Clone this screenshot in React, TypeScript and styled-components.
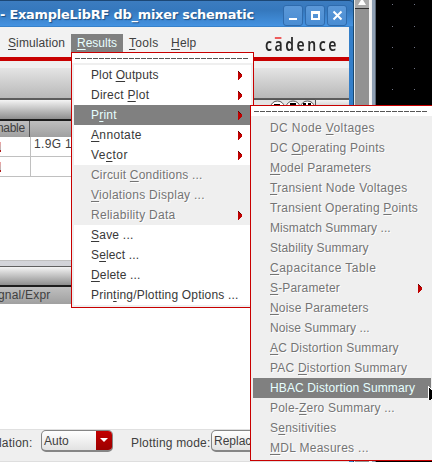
import React from "react";
import styled, { createGlobalStyle, css } from "styled-components";

const Global = createGlobalStyle`
  * { box-sizing: border-box; }
  body { margin: 0; overflow: hidden; background: #fff; }
`;

const Desktop = styled.div`
  position: relative;
  display: flex;
  width: 432px;
  height: 462px;
  overflow: hidden;
  background: #000;
  color: #404040;
  font: 12px/20px "Liberation Sans", sans-serif;
`;

const AppWindow = styled.main`
  width: 353px;
  height: 462px;
  border-right: 4px solid #347fc9;
  background: #fff;
  flex: none;
  display: flex;
  flex-direction: column;
  box-shadow: 1px 0 #17486f;
`;

const TitleBar = styled.header`
  height: 27px;
  flex: none;
  margin-right: -4px;
  border-top: 1px solid #1c4775;
  border-radius: 0 4px 0 0;
  background: linear-gradient(#3c7cc0, #3578bd 35%, #4492e0 95%, #2f77bd);
  display: flex;
  align-items: center;
  justify-content: space-between;
  padding: 2px 6px 0 0;
`;

const Title = styled.h1`
  margin: 0;
  color: #fff;
  font: bold 12.9px/20px "DejaVu Sans", sans-serif;
  letter-spacing: -0.21px;
  white-space: pre;
  text-shadow: 1px 1px 1px #1d4d80;
`;

const WindowButtons = styled.div`
  display: flex;
  gap: 2px;
`;

const WindowButton = styled.button`
  width: 20px;
  height: 21px;
  padding: 0;
  border: 1px solid #2f6bad;
  border-radius: 3px;
  background: linear-gradient(#5b98d8, #4a8dd3);
  display: grid;
  place-items: center;
`;

const MenuBar = styled.nav`
  height: 30px;
  flex: none;
  display: flex;
  background: #f2f2f2;
  padding: 7px 0 0 8px;
`;

const MenuTitle = styled.span<{ $w: number; $active?: boolean; $track?: number }>`
  width: ${(p) => p.$w}px;
  height: 18px;
  line-height: 18px;
  letter-spacing: ${(p) => p.$track ?? 0.3}px;
  white-space: nowrap;
  flex: none;
  ${(p) =>
    p.$active &&
    css`
      margin-right: 6px;
      padding-left: 6px;
      background: #808080;
      color: #e8ffff;
    `}
`;

const Key = styled.span`
  text-decoration: underline;
  text-decoration-thickness: 1px;
  text-underline-offset: 2px;
  text-decoration-skip-ink: none;
`;

const Logo = styled.div`
  position: relative;
  margin: 0 0 0 58px;
  width: 80px;
  height: 22px;
  color: #292929;
  font: 600 17px/22px "Noto Sans", sans-serif;
  letter-spacing: 3.1px;
  transform: scaleX(0.82);
  transform-origin: 0 0;
  white-space: nowrap;
`;

const Macron = styled.i`
  position: absolute;
  left: 12px;
  top: 3px;
  width: 8px;
  height: 2px;
  background: #ed5c5c;
`;

const Toolbar = styled.div`
  flex: none;
  height: 43px;
  border-top: 4px solid #c80000;
  background: linear-gradient(#efefef 0 7px, #e4e4e4 7px, #b8b8b8 37px);
  border-bottom: 2px solid #5c5c5c;
`;

const PaneTitle = styled.div<{ $h: number; $line: number }>`
  flex: none;
  display: flex;
  justify-content: flex-end;
  height: ${(p) => p.$h}px;
  border-bottom: ${(p) => p.$line}px solid #1c1c1c;
  background: linear-gradient(#f4f4f4, #8e8e8e);
`;

const PaneButtons = styled.div`
  width: 64px;
  height: 14px;
  margin: -1px 33px 0 0;
`;

const HeaderRow = styled.div<{ $h: number }>`
  flex: none;
  display: flex;
  height: ${(p) => p.$h}px;
  line-height: ${(p) => p.$h - 1}px;
  background: linear-gradient(#bfbfbf, #a0a0a0);
`;

const HeaderCell = styled.span<{ $w: number; $shift: number; $track: number; $rule?: boolean }>`
  width: ${(p) => p.$w}px;
  border-right: ${(p) => (p.$rule ? "1px solid #555" : "0")};
  text-indent: ${(p) => p.$shift}px;
  letter-spacing: ${(p) => p.$track}px;
`;

const Row = styled.div`
  flex: none;
  height: 20px;
  display: flex;
  border-bottom: 1px solid #c0c0c0;
  line-height: 15px;
`;

const RowLead = styled.span`
  width: 31px;
  border-right: 1px solid #c0c0c0;
  padding-top: 5px;
`;

const Tick = styled.i`
  display: block;
  width: 1px;
  height: 10px;
  background: linear-gradient(#f0a0a0, #b8b8b8 80%, #b02020 80%);
`;

const RowText = styled.span`
  padding-left: 3px;
  letter-spacing: 0.35px;
`;

const Body = styled.div<{ $h: number }>`
  flex: none;
  height: ${(p) => p.$h}px;
`;

const Splitter = styled.div`
  flex: none;
  height: 7px;
  background: linear-gradient(90deg, #d4d5da, #cbccd2);
  border-top: 1px solid #c0c0c0;
  border-bottom: 1px solid #606060;
`;

const StatusBar = styled.footer`
  flex: none;
  height: 33px;
  display: flex;
  align-items: flex-start;
  background: #efefef;
  border-top: 1px solid #e0e0e0;
  border-bottom: 1px solid #dedede;
`;

const StatusLabel = styled.label<{ $w: number; $track: number; $shift?: number }>`
  width: ${(p) => p.$w}px;
  padding-top: 3px;
  text-indent: ${(p) => p.$shift ?? 0}px;
  letter-spacing: ${(p) => p.$track}px;
  white-space: nowrap;
`;

const Combo = styled.div`
  display: flex;
  width: 72px;
  height: 22px;
  flex: none;
  border: 1px solid #858585;
  border-bottom-width: 2px;
  border-radius: 5px;
  background: linear-gradient(#fff, #e2e2e2);
  overflow: hidden;
  line-height: 20px;
  padding-left: 2px;
  justify-content: space-between;
`;

const ComboArrow = styled.span`
  width: 16px;
  background: linear-gradient(#c20000, #9c0000);
  display: grid;
  place-items: center;
`;

const ScrollTrack = styled.div`
  width: 17px;
  margin-left: 1px;
  height: 462px;
  flex: none;
  background: #929292;
  border-left: 1px solid #e8e8e8;
  border-right: 2px solid #f4f4f4;
`;

const ScrollButton = styled.div`
  height: 9px;
  border-bottom: 1px solid #333;
  background: #aaa;
  display: flex;
  justify-content: center;
`;

const Frame = styled.div`
  width: 5px;
  flex: none;
  background: linear-gradient(90deg, #f0f0f0 1px, #8fa0b4 1px 4px, #5b6775 4px);
`;

const Canvas = styled.div`
  flex: 1;
  background: #000;
`;

const Popup = styled.div<{ $x: number; $y: number; $w: number; $h: number }>`
  position: absolute;
  left: ${(p) => p.$x}px;
  top: ${(p) => p.$y}px;
  width: ${(p) => p.$w}px;
  height: ${(p) => p.$h}px;
  border: 1px solid #c80000;
  background: #efefef;
  padding: 0 2px;
`;

const TearOff = styled.div`
  height: 10px;
  margin: 0 -2px 2px;
  padding: 5px 5px 0 3px;
  background: #fff;

  &::after {
    content: "";
    display: block;
    height: 1px;
    background: repeating-linear-gradient(90deg, #555 0 5px, transparent 5px 6px);
  }
`;

const Item = styled.div<{ $disabled?: boolean; $active?: boolean; $track?: number }>`
  height: 20px;
  display: flex;
  align-items: center;
  justify-content: space-between;
  padding: 0 8px 0 17px;
  white-space: pre;
  letter-spacing: ${(p) => p.$track ?? 0.35}px;
  background: ${(p) => (p.$active ? "#808080" : p.$disabled ? "#efefef" : "#fff")};
  color: ${(p) => (p.$active ? "#e6ffff" : p.$disabled ? "#747474" : "#383838")};
  text-shadow: ${(p) => (p.$disabled && !p.$active ? "1px 1px #fff" : "none")};
`;

const Pointer = styled.svg`
  position: absolute;
  left: 427px;
  top: 386px;
`;

function Caption({ text }: { text: string }) {
  const at = text.indexOf("&");
  if (at < 0) return <span>{text}</span>;
  return (
    <span>
      {text.slice(0, at)}
      <Key>{text[at + 1]}</Key>
      {text.slice(at + 2)}
    </span>
  );
}

const Arrow = () => (
  <svg width="5" height="9" shapeRendering="crispEdges">
    <path d="M0 0h1v1h1v1h1v1h1v3h-1v1h-1v1h-1v1H0z" fill="#c00000" />
    <path d="M0 0h1v1h1v1h1v1h-1v-1h-1v-1H0z" fill="#600" />
  </svg>
);

type Entry = { text: string; sub?: boolean; disabled?: boolean; active?: boolean; track?: number };

const results: Entry[] = [
  { text: "Plot &Outputs", sub: true, track: 0.12 },
  { text: "Direct &Plot", sub: true, track: 0.26 },
  { text: "P&rint", sub: true, active: true, track: 0.2 },
  { text: "&Annotate", sub: true },
  { text: "Ve&ctor", sub: true, track: 0.48 },
  { text: "Circuit &Conditions ...", disabled: true, track: 0.19 },
  { text: "&Violations Display ...", disabled: true, track: 0.27 },
  { text: "Reliability Data", sub: true, disabled: true, track: 0.28 },
  { text: "&Save ...", track: 0.23 },
  { text: "S&elect ...", track: 0.15 },
  { text: "&Delete ...", track: 0.15 },
  { text: "Prin&ting/Plotting Options ...", track: 0.19 },
];

const print: Entry[] = [
  { text: "DC Node &Voltages", track: 0.39 },
  { text: "DC &Operating Points", track: 0.26 },
  { text: "&Model Parameters", track: 0.2 },
  { text: "&Transient Node Voltages", track: 0.28 },
  { text: "Transient Operating &Points", track: 0.22 },
  { text: "Mismatch Summary ...", track: 0.07 },
  { text: "Stability Summary", track: 0.12 },
  { text: "&Capacitance Table", track: 0.46 },
  { text: "&S-Parameter", sub: true, track: 0.17 },
  { text: "&Noise Parameters", track: 0.16 },
  { text: "Noise Summary ...", track: 0.06 },
  { text: "&AC Distortion Summary", track: 0.16 },
  { text: "PAC &Distortion Summary", track: 0.21 },
  { text: "HBAC Distortion Summary", active: true, track: 0.13 },
  { text: "Pole-&Zero Summary ...", track: 0.2 },
  { text: "S&ensitivities", track: 0.24 },
  { text: "&MDL Measures ...", track: 0.29 },
].map((e) => ({ ...e, disabled: true }));

function Menu({ entries, ...box }: { entries: Entry[]; $x: number; $y: number; $w: number; $h: number }) {
  return (
    <Popup {...box}>
      <TearOff />
      {entries.map((e) => (
        <Item key={e.text} $disabled={e.disabled} $active={e.active} $track={e.track}>
          <Caption text={e.text} />
          {e.sub && <Arrow />}
        </Item>
      ))}
    </Popup>
  );
}

export default function App() {
  return (
    <Desktop>
      <Global />
      <AppWindow>
        <TitleBar>
          <Title>- ExampleLibRF db_mixer schematic</Title>
          <WindowButtons>
            <WindowButton><svg width="11" height="11"><path d="M1 8h8v2H1z" fill="#fff" /></svg></WindowButton>
            <WindowButton><svg width="11" height="11"><path d="M1 1h9v9H1zM3 4v4h5V4z" fillRule="evenodd" fill="#fff" /></svg></WindowButton>
            <WindowButton><svg width="11" height="11"><path d="M1.500 1.500l8 8M9.500 1.500l-8 8" stroke="#fff" strokeWidth="2" /></svg></WindowButton>
          </WindowButtons>
        </TitleBar>
        <MenuBar>
          <MenuTitle $w={63} $track={0.1}><Caption text="&Simulation" /></MenuTitle>
          <MenuTitle $w={52} $track={0} $active><Caption text="&Results" /></MenuTitle>
          <MenuTitle $w={42}><Caption text="&Tools" /></MenuTitle>
          <MenuTitle $w={36} $track={0.2}><Caption text="&Help" /></MenuTitle>
          <Logo>cadence<Macron /></Logo>
        </MenuBar>
        <Toolbar />
        <PaneTitle $h={21} $line={2}>
          <PaneButtons>
            <svg width="64" height="14">
              <path d="M0 .5h63.500V14H0z" fill="#e4e4e4" stroke="#555" />
              {[25.500, 41, 55.500].map((x) => (
                <ellipse key={x} cx={x} cy="7.500" rx="6.500" ry="5.500" fill="#fff" stroke="#555" />
              ))}
              <path d="M22 5h6v1h-6zM38 4h6v2h-6zM51 4h3v2h-3zM56 4h3v2h-3z" fill="#000" />
            </svg>
          </PaneButtons>
        </PaneTitle>
        <HeaderRow $h={16}>
          <HeaderCell $w={30} $shift={-3} $track={-0.3} $rule>nable</HeaderCell>
        </HeaderRow>
        <Row><RowLead><Tick /></RowLead><RowText>1.9G 1</RowText></Row>
        <Row><RowLead><Tick /></RowLead></Row>
        <Body $h={83} />
        <Splitter />
        <PaneTitle $h={20} $line={2} />
        <HeaderRow $h={17}>
          <HeaderCell $w={60} $shift={-2} $track={0.2}>gnal/Expr</HeaderCell>
        </HeaderRow>
        <Body $h={125} />
        <StatusBar>
          <StatusLabel $w={41} $track={0.2} $shift={-1}>lation:</StatusLabel>
          <Combo>
            Auto
            <ComboArrow><svg width="8" height="5"><path d="M0 0h8L4 4z" fill="#fff" /></svg></ComboArrow>
          </Combo>
          <StatusLabel $w={98} $shift={18} $track={0.2}>Plotting mode:</StatusLabel>
          <Combo>Replace</Combo>
        </StatusBar>
      </AppWindow>
      <ScrollTrack>
        <ScrollButton><svg width="8" height="6"><path d="M3 0h2l3 5H0z" fill="#fff" /></svg></ScrollButton>
      </ScrollTrack>
      <Frame />
      <Canvas>
        <svg width="56" height="462" shapeRendering="crispEdges">
          {[4, 26, 47, 68, 89].map((y) => (
            <g key={y} fill="#707486">
              <rect x="16" y={y} width="1" height="1" />
              <rect x="38" y={y} width="1" height="1" />
            </g>
          ))}
        </svg>
      </Canvas>
      <Menu entries={results} $x={71} $y={52} $w={183} $h={256} />
      <Menu entries={print} $x={250} $y={105} $w={184} $h={356} />
      <Pointer width="5" height="14" shapeRendering="crispEdges">
        <path d="M1 0l12 12H8l2 5-2 1-3-5-4 4z" fill="#000" stroke="#fff" />
      </Pointer>
    </Desktop>
  );
}
